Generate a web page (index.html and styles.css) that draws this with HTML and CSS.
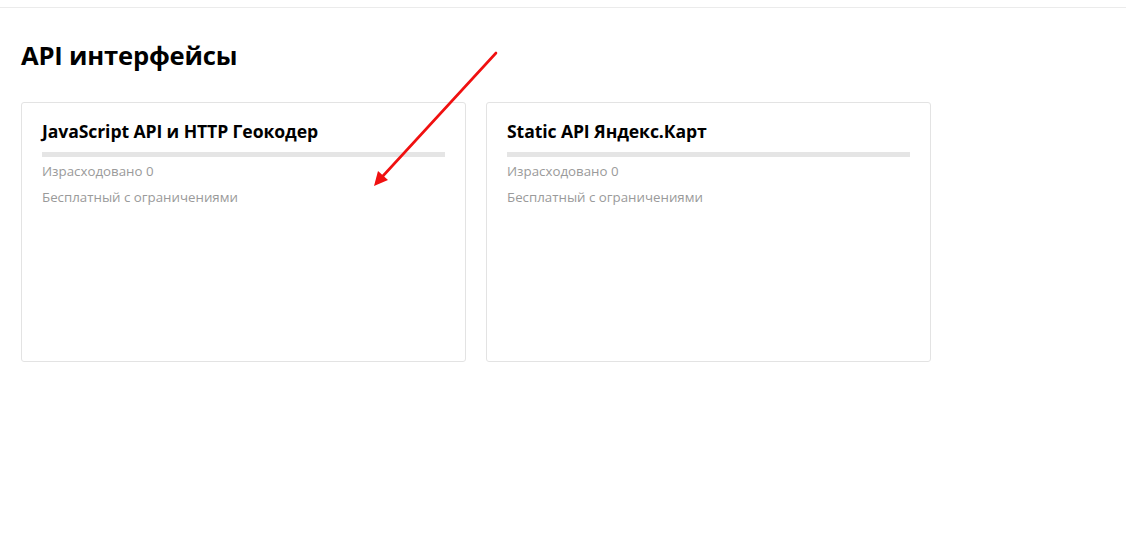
FILE: index.html
```html
<!DOCTYPE html>
<html lang="ru">
<head>
<meta charset="utf-8">
<link rel="stylesheet" href="styles.css">
</head>
<body>
<header class="topbar"></header>
<main class="page">
  <h1 class="page-title">API интерфейсы</h1>
  <div class="cards">
    <section class="card">
      <h2 class="card-title">JavaScript API и HTTP Геокодер</h2>
      <div class="bar"></div>
      <p class="meta">Израсходовано 0</p>
      <p class="meta">Бесплатный с ограничениями</p>
    </section>
    <section class="card">
      <h2 class="card-title">Static API Яндекс.Карт</h2>
      <div class="bar"></div>
      <p class="meta">Израсходовано 0</p>
      <p class="meta">Бесплатный с ограничениями</p>
    </section>
  </div>
</main>
<svg class="arrow" width="1126" height="552" viewBox="0 0 1126 552">
  <line x1="496" y1="53" x2="382" y2="177" stroke="#f01010" stroke-width="2.6" stroke-linecap="round"/>
  <polygon points="374,186 378,171 388,180" fill="#f01010"/>
</svg>
</body>
</html>
```
FILE: styles.css
```css
html, body {
  margin: 0;
  padding: 0;
  background: #fff;
  font-family: "Open Sans", "Noto Sans", sans-serif;
  color: #000;
}
.topbar {
  height: 7px;
  border-bottom: 1px solid #ebebeb;
}
.page {
  padding: 0 21px;
}
.page-title {
  margin: 0;
  padding-top: 32px;
  font-size: 25.6px;
  line-height: 32px;
  font-weight: 700;
  letter-spacing: -0.2px;
}
.cards {
  display: flex;
  gap: 20px;
  margin-top: 30px;
}
.card {
  box-sizing: border-box;
  width: 445px;
  height: 260px;
  border: 1px solid #e3e3e3;
  border-radius: 3px;
  padding: 16px 20px 0 20px;
}
.card-title {
  margin: 0;
  font-size: 17.6px;
  line-height: 24px;
  font-weight: 700;
  letter-spacing: -0.1px;
}
.bar {
  height: 5px;
  background: #e5e5e5;
  margin-top: 9px;
  margin-bottom: 1px;
}
.meta {
  margin: 0;
  font-size: 13.3px;
  line-height: 26px;
  color: #9a9a9a;
}
.arrow {
  position: absolute;
  left: 0;
  top: 0;
  pointer-events: none;
}
```
